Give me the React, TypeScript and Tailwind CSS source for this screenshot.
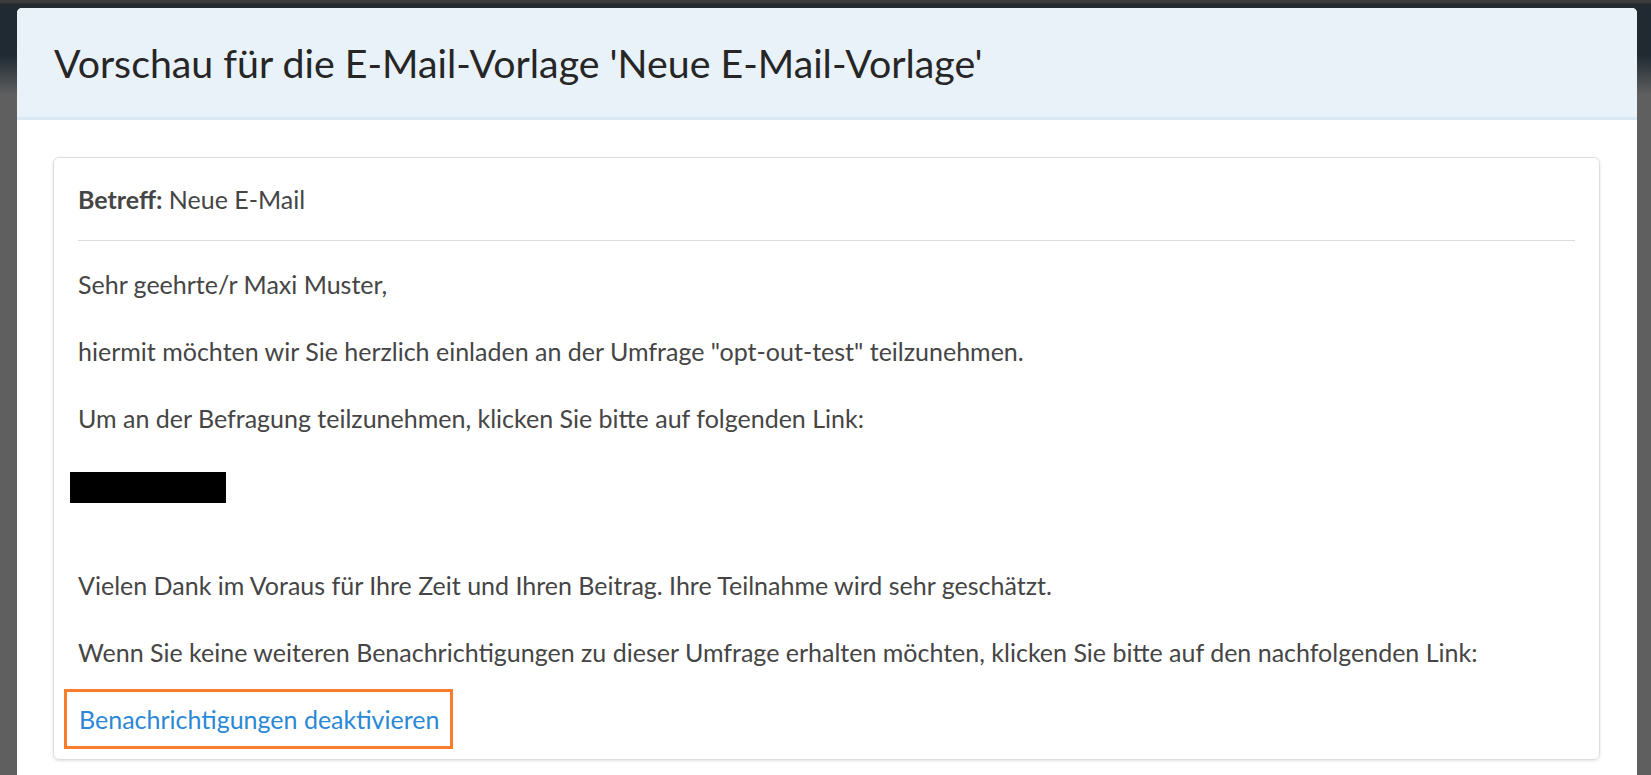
import React from "react";

export default function App() {
  return (
    <div
      className="relative h-[775px] w-full overflow-hidden bg-[linear-gradient(to_bottom,#3b3b3b_0px,#3b3b3b_3px,#1f2a33_4px,#1f2a33_55px,#5f5f5f_95px,#5f5f5f_100%)]"
      style={{ fontFamily: "Lato, 'Noto Sans', sans-serif" }}
    >
      <div className="ml-[17px] mt-[8px] w-[1620px] h-[800px] rounded-t-[5px] bg-white overflow-hidden">
        <div className="flex h-[112px] items-center border-b-[3px] border-[#d8e8f5] bg-[#e9f1f9] px-[37px]">
          <h1 className="text-[39.3px] leading-none text-[#262626]">
            Vorschau für die E-Mail-Vorlage 'Neue E-Mail-Vorlage'
          </h1>
        </div>
        <div className="pl-[36px] pr-[37px] pt-[37px]">
          <div className="rounded-[6px] border border-[#dedede] px-[24px] pt-[26px] pb-[10px] text-[25px] text-[#454545] shadow-[0_1px_3px_rgba(0,0,0,0.12)]">
            <div className="leading-[30px]">
              <span className="font-bold">Betreff:</span> Neue E-Mail
            </div>
            <div className="mt-[26px] mb-[28px] h-px bg-[#dcdcdc]" />
            <p className="leading-[30px]">Sehr geehrte/r Maxi Muster,</p>
            <p className="mt-[37px] leading-[30px]">
              hiermit möchten wir Sie herzlich einladen an der Umfrage "opt-out-test" teilzunehmen.
            </p>
            <p className="mt-[37px] leading-[30px]">
              Um an der Befragung teilzunehmen, klicken Sie bitte auf folgenden Link:
            </p>
            <div className="-ml-[8px] mt-[39px] h-[31px] w-[156px] bg-black" />
            <p className="mt-[67px] leading-[30px]">
              Vielen Dank im Voraus für Ihre Zeit und Ihren Beitrag. Ihre Teilnahme wird sehr geschätzt.
            </p>
            <p className="mt-[37px] leading-[30px]">
              Wenn Sie keine weiteren Benachrichtigungen zu dieser Umfrage erhalten möchten, klicken Sie bitte auf den nachfolgenden Link:
            </p>
            <div className="-ml-[14px] mt-[22px] flex h-[60px] w-[389px] items-center border-[3px] border-[#fb7d2b] pl-[12px]">
              <a className="leading-[30px] text-[#2a88d6]" href="#">
                Benachrichtigungen deaktivieren
              </a>
            </div>
          </div>
        </div>
      </div>
    </div>
  );
}
